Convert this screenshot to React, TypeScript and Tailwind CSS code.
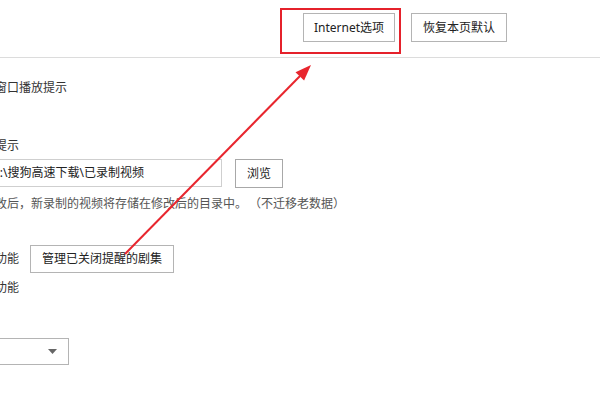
import React from "react";

export default function App() {
  return (
    <div className="relative w-[600px] h-[400px] overflow-hidden bg-white text-[12px] leading-[16px] text-[#333] font-['Noto_Sans','Noto_Sans_CJK_SC',sans-serif]">
      {/* header */}
      <div className="h-[58px] border-b border-[#dcdcdc] flex items-start pt-[13px] pl-[303px] gap-[16px]">
        <div className="w-[92px] h-[29px] border border-[#b4b4b4] flex items-center justify-center text-[#222]">
          Internet选项
        </div>
        <div className="w-[96px] h-[29px] border border-[#b4b4b4] flex items-center justify-center text-[#222]">
          恢复本页默认
        </div>
      </div>

      {/* content */}
      <div className="ml-[-5px] flex flex-col items-start">
        <div className="mt-[22px] whitespace-nowrap">窗口播放提示</div>
        <div className="mt-[42px] whitespace-nowrap">提示</div>
        <div className="mt-[5px] flex items-start">
          <div className="ml-[-10px] w-[237px] h-[28px] border border-[#cfcfcf] flex items-center pl-[5px] text-[#222] whitespace-nowrap overflow-hidden">
            D:\搜狗高速下载\已录制视频
          </div>
          <div className="ml-[13px] w-[48px] h-[29px] border border-[#a8a8a8] flex items-center justify-center text-[#222]">
            浏览
          </div>
        </div>
        <div className="mt-[7px] whitespace-nowrap text-[#555] font-['Noto_Sans_CJK_SC',sans-serif]">
          改后，新录制的视频将存储在修改后的目录中。<span className="ml-[8px]">（不迁移老数据）</span>
        </div>
        <div className="mt-[34px] flex items-center">
          <div className="whitespace-nowrap">功能</div>
          <div className="ml-[11px] w-[144px] h-[28px] border border-[#b4b4b4] flex items-center justify-center text-[#222]">
            管理已关闭提醒的剧集
          </div>
        </div>
        <div className="mt-[7px] whitespace-nowrap">功能</div>
        <div className="mt-[42px] ml-[-10px] w-[84px] h-[27px] border border-[#b4b4b4] flex items-center justify-end pr-[11px]">
          <svg width="9" height="5" viewBox="0 0 9 5">
            <polygon points="0,0 9,0 4.5,5" fill="#666" />
          </svg>
        </div>
      </div>

      {/* annotation overlay */}
      <div className="absolute left-[280px] top-[8px] w-[121px] h-[46px] border-2 border-[#e5212b] pointer-events-none" />
      <svg className="absolute inset-0 pointer-events-none" width="600" height="400" viewBox="0 0 600 400">
        <line x1="125" y1="254" x2="300" y2="76" stroke="#e8262e" strokeWidth="2" />
        <polygon points="311,65 295.5,72.2 304.1,80.6" fill="#e8262e" />
      </svg>
    </div>
  );
}
